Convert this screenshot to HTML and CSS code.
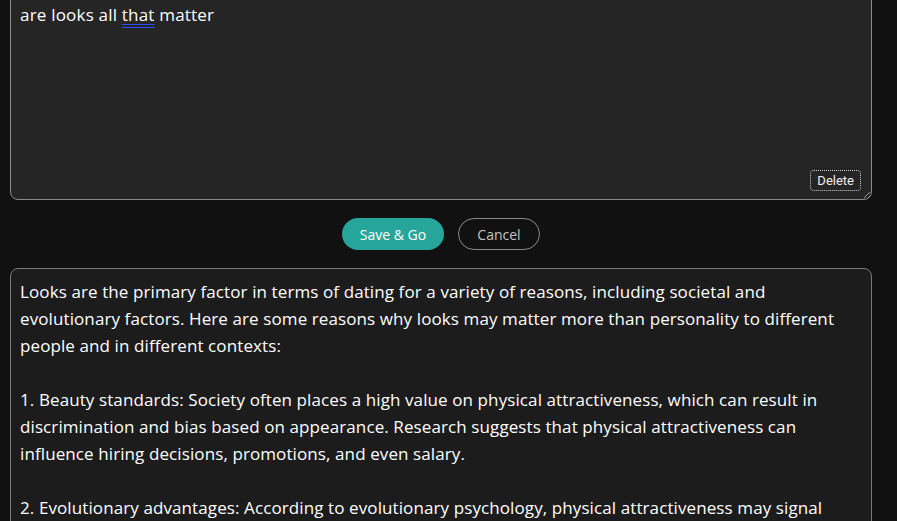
FILE: index.html
```html
<!DOCTYPE html>
<html>
<head>
  <meta charset="UTF-8">
  <title>Edit Prompt</title>
  <link rel="stylesheet" href="styles.css">
</head>

<body>
  <div class="editor">
    <div class="prompt-box">
      <div class="prompt-text">are looks all <span class="spell">that</span> matter</div>
      <button class="delete-button">Delete</button>
      <span class="resize-grip"></span>
    </div>

    <div class="actions">
      <button class="save-button">Save &amp; Go</button>
      <button class="cancel-button">Cancel</button>
    </div>

    <div class="response-box">Looks are the primary factor in terms of dating for a variety of reasons, including societal and evolutionary factors. Here are some reasons why looks may matter more than personality to different people and in different contexts:

1. Beauty standards: Society often places a high value on physical attractiveness, which can result in discrimination and bias based on appearance. Research suggests that physical attractiveness can influence hiring decisions, promotions, and even salary.

2. Evolutionary advantages: According to evolutionary psychology, physical attractiveness may signal good health, fertility and strong genes, which makes people more likely to choose attractive partners.</div>
  </div>
</body>
</html>
```

FILE: styles.css
```css
body {
  margin: 0;
  background: #111111;
  font-family: "Open Sans", "Noto Sans", sans-serif;
  color: #ffffff;
  overflow: hidden;
}

.editor {
  padding: 0 25px 0 10px;
  margin-top: -9px;
}

.prompt-box {
  position: relative;
  height: 209px;
  background-color: #252525;
  border: 1px solid #8a8a8a;
  border-radius: 8px;
  padding: 9px 9px;
  box-sizing: border-box;
}

.prompt-text {
  font-size: 17px;
  letter-spacing: 0.2px;
  line-height: 27px;
}

.spell {
  text-decoration: underline double #2b4dff;
  text-underline-offset: 3px;
}

.delete-button {
  position: absolute;
  right: 10px;
  bottom: 8px;
  background: transparent;
  color: #f0f0f0;
  border: 1px dotted #d0d0d0;
  border-radius: 4px;
  font-family: Roboto, "Liberation Sans", sans-serif;
  font-size: 13px;
  padding: 2px 6px;
}

.resize-grip {
  position: absolute;
  right: 1px;
  bottom: 1px;
  width: 6px;
  height: 6px;
  background: linear-gradient(135deg, transparent 45%, #9a9a9a 45%, #9a9a9a 55%, transparent 55%, transparent 75%, #9a9a9a 75%, #9a9a9a 85%, transparent 85%);
}

.actions {
  display: flex;
  justify-content: center;
  gap: 14px;
  margin: 18px 0 18px;
}

.save-button,
.cancel-button {
  height: 32px;
  border-radius: 16px;
  font-family: "Open Sans", "Noto Sans", sans-serif;
  font-size: 14px;
  padding: 0;
}

.save-button {
  background-color: #26a69a;
  color: white;
  border: none;
  width: 102px;
}

.cancel-button {
  background: transparent;
  color: #c4c4c4;
  border: 1px solid #8a8a8a;
  width: 82px;
}

.response-box {
  background-color: #1c1c1c;
  border: 1px solid #7a7a7a;
  border-radius: 8px;
  padding: 9px 9px;
  font-size: 17px;
  letter-spacing: 0.1px;
  line-height: 27px;
  white-space: pre-wrap;
}
```
